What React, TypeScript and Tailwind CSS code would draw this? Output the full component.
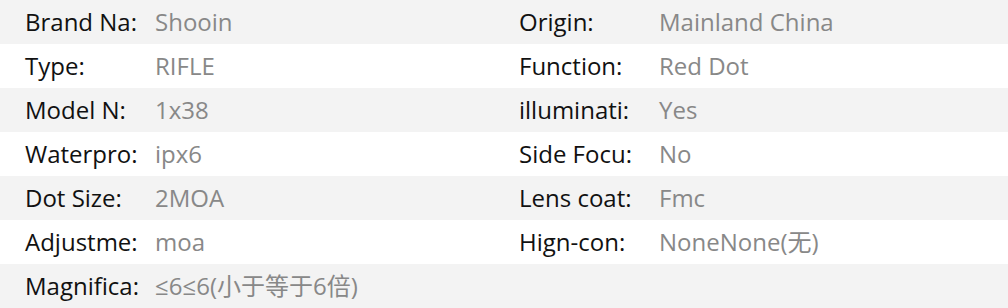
import React from "react";

const rows: [string, string, string?, string?][] = [
  ["Brand Na:", "Shooin", "Origin:", "Mainland China"],
  ["Type:", "RIFLE", "Function:", "Red Dot"],
  ["Model N:", "1x38", "illuminati:", "Yes"],
  ["Waterpro:", "ipx6", "Side Focu:", "No"],
  ["Dot Size:", "2MOA", "Lens coat:", "Fmc"],
  ["Adjustme:", "moa", "Hign-con:", "NoneNone(无)"],
  ["Magnifica:", "≤6≤6(小于等于6倍)"],
];

const App: React.FC = () => {
  return (
    <div
      className="w-[1008px] bg-white text-[24px] leading-none"
      style={{ fontFamily: '"Open Sans", "Noto Sans CJK SC", sans-serif' }}
    >
      {rows.map(([l1, v1, l2, v2], i) => (
        <div
          key={i}
          className={`flex h-[44px] items-center pb-[1px] ${i % 2 === 0 ? "bg-[#f3f3f3]" : "bg-white"}`}
        >
          <div className="flex w-[494px] items-center pl-[25px]">
            <span className="w-[130px] whitespace-nowrap text-[#111]">{l1}</span>
            <span className="whitespace-nowrap text-[#888]">{v1}</span>
          </div>
          {l2 && (
            <div className="flex items-center pl-[25px]">
              <span className="w-[140px] whitespace-nowrap text-[#111]">{l2}</span>
              <span className="whitespace-nowrap text-[#888]">{v2}</span>
            </div>
          )}
        </div>
      ))}
    </div>
  );
};

export default App;
